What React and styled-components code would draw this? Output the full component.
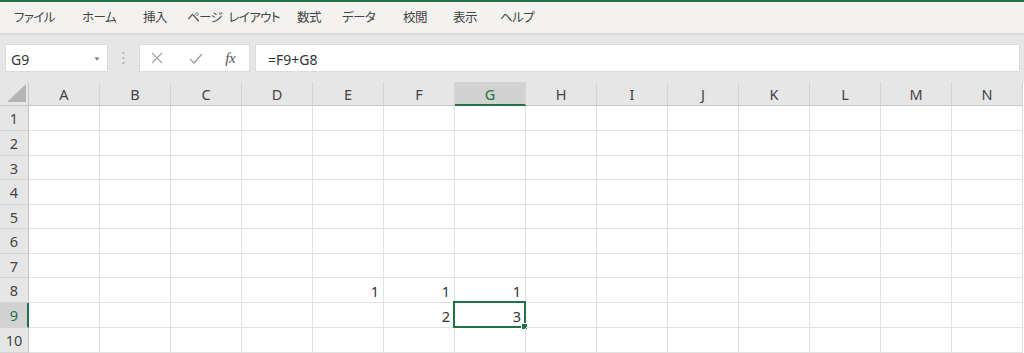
import React from "react";
import styled, { createGlobalStyle } from "styled-components";

const GlobalStyle = createGlobalStyle`
  html, body { margin: 0; padding: 0; background: #ffffff; }
  body { font-family: "Noto Sans CJK JP", "Noto Sans", sans-serif; }
  * { box-sizing: border-box; }
`;

const GREEN = "#217346";

const Page = styled.div`
  width: 1024px;
  height: 353px;
  overflow: hidden;
  display: flex;
  flex-direction: column;
  background: #e6e6e6;
`;

const TopAccent = styled.div`
  height: 2px;
  background: ${GREEN};
  flex: none;
`;

const MenuBar = styled.nav`
  height: 33px;
  flex: none;
  display: flex;
  align-items: center;
  padding-left: 14px;
  padding-bottom: 1px;
  background: #f3f2f1;
  border-bottom: 2px solid #dadada;
`;

const MenuItem = styled.span`
  width: ${(p) => p.$w}px;
  flex: none;
  font-size: 12.5px;
  letter-spacing: -0.6px;
  word-spacing: 4px;
  color: #444444;
  font-feature-settings: "palt";
  white-space: nowrap;
  line-height: 1;
`;

const FormulaBar = styled.div`
  flex: none;
  display: flex;
  align-items: stretch;
  height: 47px;
  padding: 9px 4px 10px 5px;
  background: #e6e6e6;
`;

const NameBox = styled.div`
  width: 103px;
  background: #ffffff;
  border: 1px solid #dcdcdc;
  display: flex;
  align-items: center;
  justify-content: space-between;
  padding: 2px 7px 0 5px;
  font-family: "Noto Sans", "Liberation Sans", sans-serif;
  font-size: 14px;
  color: #333333;
`;

const Dots = styled.div`
  width: 31px;
  display: flex;
  align-items: center;
  justify-content: center;
`;

const ButtonBox = styled.div`
  width: 111px;
  background: #ffffff;
  border: 1px solid #dcdcdc;
  display: flex;
  align-items: center;
  padding-left: 11px;
`;

const IconSlot = styled.div`
  width: ${(p) => p.$w}px;
  display: flex;
  align-items: center;
`;

const Fx = styled.span`
  font-family: "Liberation Serif", "DejaVu Serif", serif;
  font-style: italic;
  font-size: 15px;
  color: #555555;
  letter-spacing: -0.5px;
  line-height: 1;
`;

const FormulaInput = styled.div`
  flex: 1;
  margin-left: 5px;
  background: #ffffff;
  border: 1px solid #dcdcdc;
  display: flex;
  align-items: center;
  padding: 2px 0 0 12px;
  font-family: "Noto Sans", "Liberation Sans", sans-serif;
  font-size: 14px;
  color: #333333;
`;

const Sheet = styled.div`
  display: grid;
  grid-template-columns: 29px repeat(14, 71px);
  grid-template-rows: 24px ${(p) => p.$rows.map((r) => r + "px").join(" ")};
  background: #ffffff;
  flex: none;
`;

const Corner = styled.div`
  background: #e6e6e6;
  border-right: 1px solid #c6c6c6;
  border-bottom: 1px solid #c6c6c6;
  display: flex;
  align-items: flex-end;
  justify-content: flex-end;
  padding: 0 2px 3px 0;
`;

const ColHeader = styled.div`
  background: ${(p) => (p.$active ? "#d2d2d2" : "#e6e6e6")};
  color: ${(p) => (p.$active ? GREEN : "#444444")};
  border-right: 1px solid #d4d4d4;
  border-bottom: ${(p) => (p.$active ? `2px solid ${GREEN}` : "1px solid #c6c6c6")};
  display: flex;
  align-items: center;
  justify-content: center;
  font-family: "Noto Sans", "Liberation Sans", sans-serif;
  font-size: 14.5px;
  padding-top: ${(p) => (p.$active ? "1px" : "0")};
`;

const RowHeader = styled.div`
  background: ${(p) => (p.$active ? "#d2d2d2" : "#e6e6e6")};
  color: ${(p) => (p.$active ? GREEN : "#444444")};
  border-right: ${(p) => (p.$active ? `2px solid ${GREEN}` : "1px solid #c6c6c6")};
  border-bottom: 1px solid #d4d4d4;
  display: flex;
  align-items: center;
  justify-content: center;
  padding-left: ${(p) => (p.$active ? "1px" : "0")};
  font-family: "Noto Sans", "Liberation Sans", sans-serif;
  font-size: 14.5px;
`;

const Cell = styled.div`
  position: relative;
  border-right: 1px solid #e1e1e1;
  border-bottom: 1px solid #e1e1e1;
  display: flex;
  align-items: center;
  justify-content: flex-end;
  padding: 1px 4px 0 0;
  font-family: "Noto Sans", "Liberation Sans", sans-serif;
  font-size: 14.5px;
  color: #333333;
`;

const Selection = styled.div`
  position: absolute;
  left: -2px;
  top: -2px;
  right: -1px;
  bottom: -1px;
  border: 2px solid ${GREEN};
  pointer-events: none;
`;

const FillHandle = styled.div`
  position: absolute;
  right: -4px;
  bottom: -4px;
  width: 5px;
  height: 5px;
  background: ${GREEN};
  border: 1px solid #ffffff;
  box-sizing: content-box;
`;

const menu = [
  ["ファイル", 68],
  ["ホーム", 61],
  ["挿入", 44],
  ["ページ レイアウト", 110],
  ["数式", 45],
  ["データ", 61],
  ["校閲", 50],
  ["表示", 47],
  ["ヘルプ", 60],
];

const cols = ["A", "B", "C", "D", "E", "F", "G", "H", "I", "J", "K", "L", "M", "N"];
const rowHeights = [25, 25, 24, 25, 24, 25, 24, 25, 25, 25];
const values = { E8: "1", F8: "1", G8: "1", F9: "2", G9: "3" };

export default function App() {
  return (
    <>
      <GlobalStyle />
      <Page>
        <TopAccent />
        <MenuBar>
          {menu.map(([label, w]) => (
            <MenuItem key={label} $w={w}>
              {label}
            </MenuItem>
          ))}
        </MenuBar>
        <FormulaBar>
          <NameBox>
            <span>G9</span>
            <svg width="6" height="4" viewBox="0 0 6 4">
              <path d="M0.5 0.5 L5.5 0.5 L3 3.5 Z" fill="#777" />
            </svg>
          </NameBox>
          <Dots>
            <svg width="3" height="14" viewBox="0 0 3 14">
              <rect x="0.5" y="1" width="2" height="2" fill="#b5b5b5" />
              <rect x="0.5" y="6" width="2" height="2" fill="#b5b5b5" />
              <rect x="0.5" y="11" width="2" height="2" fill="#b5b5b5" />
            </svg>
          </Dots>
          <ButtonBox>
            <IconSlot $w={38}>
              <svg width="12" height="12" viewBox="0 0 12 12">
                <path d="M1 1 L11 11 M11 1 L1 11" stroke="#a6a6a6" strokeWidth="1.3" fill="none" />
              </svg>
            </IconSlot>
            <IconSlot $w={37}>
              <svg width="14" height="11" viewBox="0 0 14 11">
                <path d="M1 6 L5 10 L13 1" stroke="#a6a6a6" strokeWidth="1.5" fill="none" />
              </svg>
            </IconSlot>
            <IconSlot $w={24}>
              <Fx>fx</Fx>
            </IconSlot>
          </ButtonBox>
          <FormulaInput>=F9+G8</FormulaInput>
        </FormulaBar>
        <Sheet $rows={rowHeights}>
          <Corner>
            <svg width="19" height="18" viewBox="0 0 19 18">
              <path d="M19 0 L19 18 L0 18 Z" fill="#b4b4b4" />
            </svg>
          </Corner>
          {cols.map((c) => (
            <ColHeader key={c} $active={c === "G"}>
              {c}
            </ColHeader>
          ))}
          {rowHeights.map((_, i) => {
            const r = i + 1;
            return (
              <React.Fragment key={r}>
                <RowHeader $active={r === 9}>{r}</RowHeader>
                {cols.map((c) => {
                  const id = c + r;
                  const selected = id === "G9";
                  return (
                    <Cell key={id}>
                      {values[id]}
                      {selected && (
                        <Selection>
                          <FillHandle />
                        </Selection>
                      )}
                    </Cell>
                  );
                })}
              </React.Fragment>
            );
          })}
        </Sheet>
      </Page>
    </>
  );
}
